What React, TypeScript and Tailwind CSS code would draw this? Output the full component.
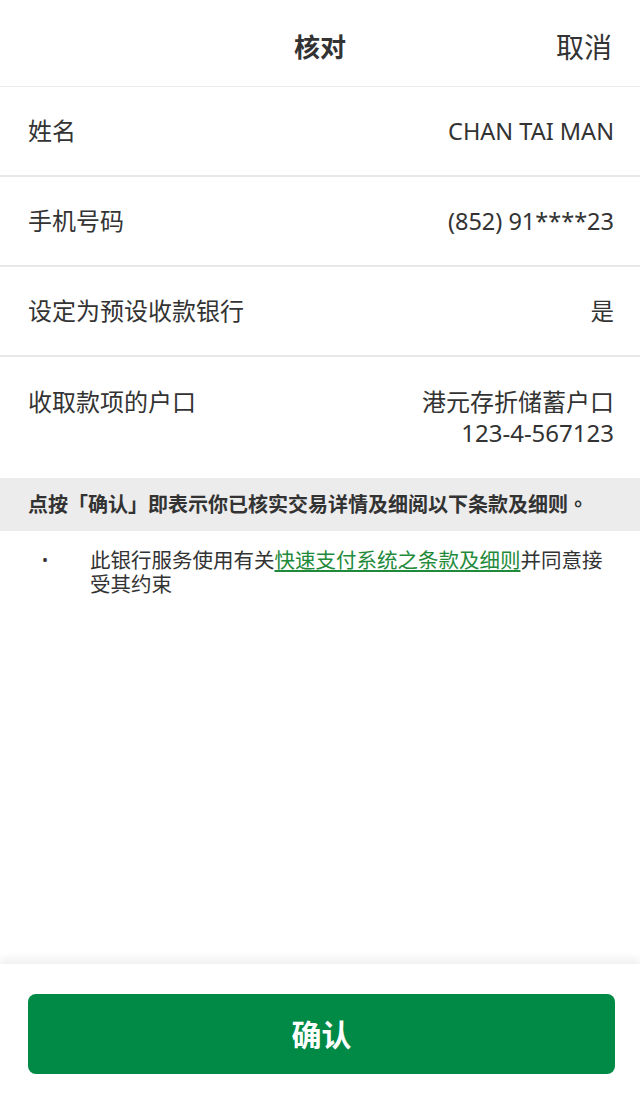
import React from 'react';

const rows = [
  { label: '姓名', value: 'CHAN TAI MAN' },
  { label: '手机号码', value: '(852) 91****23' },
  { label: '设定为预设收款银行', value: '是' },
];

export default function App() {
  return (
    <div className="flex h-[1100px] w-[640px] flex-col bg-white font-['Noto_Sans','Noto_Sans_CJK_SC',sans-serif] text-[#333333]">
      <header className="relative flex h-[87px] items-center justify-center border-b border-[#ececec] pt-[8px]">
        <h1 className="text-[26px] font-bold">核对</h1>
        <button className="absolute right-[28px] top-[29px] text-[28px] leading-[36px]">取消</button>
      </header>

      <main className="flex-1">
        {rows.map((r) => (
          <div key={r.label} className="flex items-center justify-between border-b-2 border-[#e8e8e8] pl-[28px] pr-[26px] py-[29px] text-[24px] leading-[30px]">
            <span>{r.label}</span>
            <span className="text-[23.5px]">{r.value}</span>
          </div>
        ))}
        <div className="flex justify-between pl-[28px] pr-[26px] pt-[29px] pb-[30px] text-[24px] leading-[31px]">
          <span>收取款项的户口</span>
          <div className="text-right">
            <div>港元存折储蓄户口</div>
            <div>123-4-567123</div>
          </div>
        </div>

        <div className="bg-[#ececec] px-[28px] py-[12px] font-['Noto_Sans','Noto_Sans_CJK_TC',sans-serif] text-[20px] font-bold leading-[29px]">
          点按「确认」即表示你已核实交易详情及细阅以下条款及细则。
        </div>

        <ul className="pt-[17px] pl-[42px] text-[20.5px] leading-[24px]">
          <li className="flex">
            <span className="w-[48px] shrink-0 text-[16px]">•</span>
            <p className="w-[520px]">
              此银行服务使用有关
              <a href="#" className="text-[#1e8a3a] underline underline-offset-2">快速支付系统之条款及细则</a>
              并同意接受其约束
            </p>
          </li>
        </ul>
      </main>

      <footer className="bg-white pl-[28px] pr-[25px] pt-[30px] pb-[26px] shadow-[0_-6px_8px_rgba(0,0,0,0.06)]">
        <button className="flex h-[80px] w-full items-center justify-center rounded-[8px] bg-[#008a45] text-[30px] font-bold text-white">
          确认
        </button>
      </footer>
    </div>
  );
}
